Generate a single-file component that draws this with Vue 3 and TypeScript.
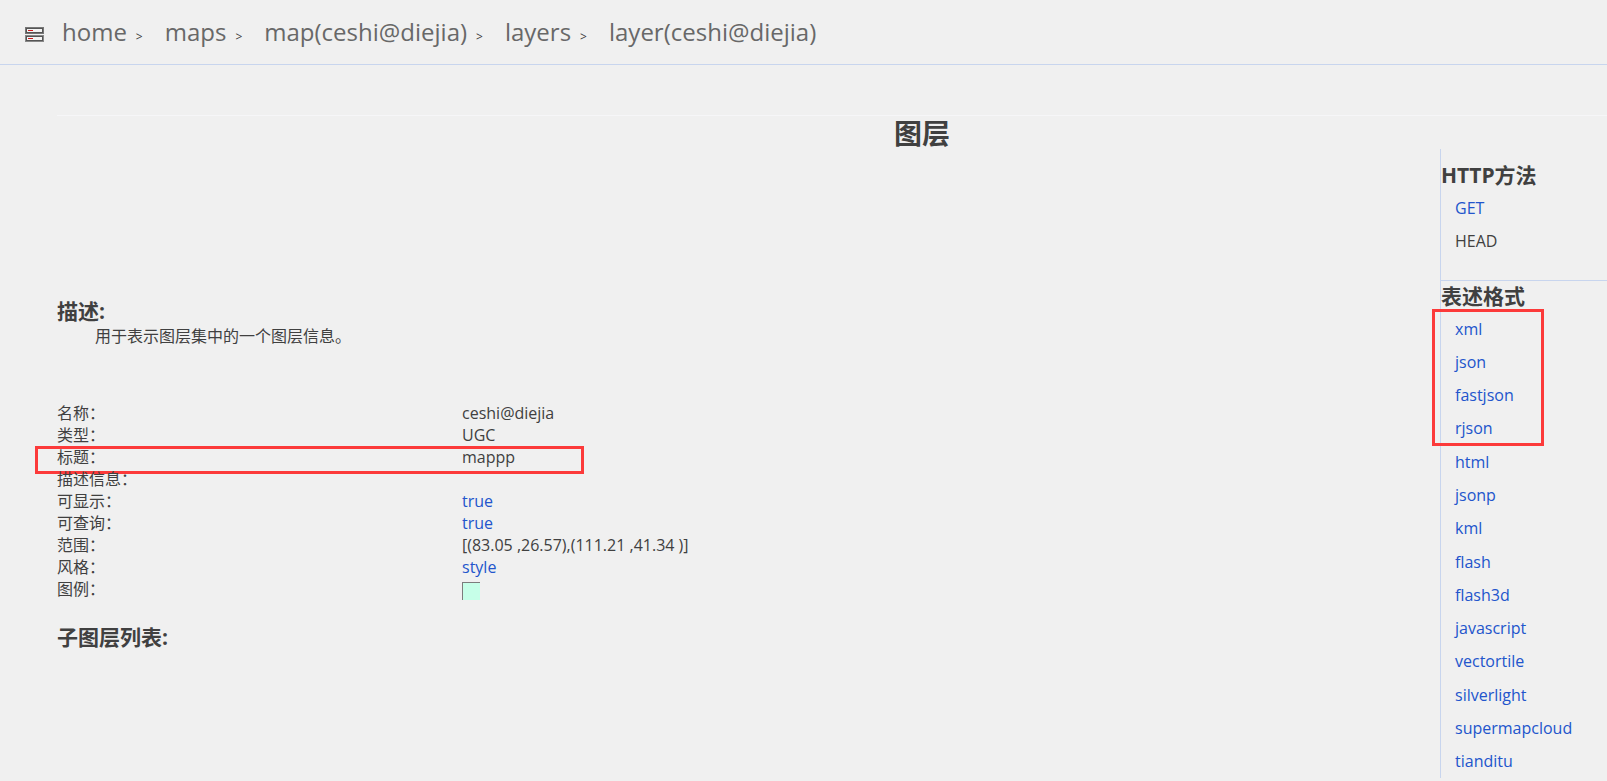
<script setup lang="ts">
interface Field {
  label: string
  value?: string
  link?: boolean
  swatch?: boolean
  marked?: boolean
}

const crumbs: string[] = ['home', 'maps', 'map(ceshi@diejia)', 'layers', 'layer(ceshi@diejia)']

const fields: Field[] = [
  { label: '名称：', value: 'ceshi@diejia' },
  { label: '类型：', value: 'UGC' },
  { label: '标题：', value: 'mappp', marked: true },
  { label: '描述信息：' },
  { label: '可显示：', value: 'true', link: true },
  { label: '可查询：', value: 'true', link: true },
  { label: '范围：', value: '[(83.05 ,26.57),(111.21 ,41.34 )]' },
  { label: '风格：', value: 'style', link: true },
  { label: '图例：', swatch: true },
]

const formats: string[] = [
  'xml', 'json', 'fastjson', 'rjson', 'html', 'jsonp', 'kml',
  'flash', 'flash3d', 'javascript', 'vectortile', 'silverlight',
  'supermapcloud', 'tianditu',
]
</script>

<template>
  <div class="page">
    <header class="topbar">
      <svg class="logo" width="19" height="15" viewBox="0 0 19 15" aria-hidden="true">
        <rect width="19" height="7" fill="#777" />
        <rect x="1" y="1" width="17" height="5" fill="#555" />
        <rect x="2" y="2" width="15" height="3" fill="#f4f4f4" />
        <rect x="3" y="3" width="5" height="1" fill="#d01c1c" />
        <rect y="8" width="19" height="7" fill="#888" />
        <rect x="1" y="9" width="17" height="5" fill="#555" />
        <rect x="2" y="10" width="15" height="3" fill="#f4f4f4" />
        <rect x="3" y="11" width="5" height="1" fill="#d01c1c" />
      </svg>
      <nav class="crumbs">
        <template v-for="(crumb, i) in crumbs" :key="i">
          <a href="#">{{ crumb }}</a>
          <span v-if="i < crumbs.length - 1" class="sep">&gt;</span>
        </template>
      </nav>
    </header>

    <main class="body">
      <h1>图层</h1>
      <div class="columns">
        <section class="content">
          <h2>描述:</h2>
          <p class="intro">用于表示图层集中的一个图层信息。</p>
          <table class="fields">
            <tbody>
              <tr v-for="field in fields" :key="field.label">
                <th scope="row">
                  {{ field.label }}
                  <span v-if="field.marked" class="mark row-mark"></span>
                </th>
                <td>
                  <a v-if="field.link" href="#">{{ field.value }}</a>
                  <span v-else-if="field.swatch" class="swatch"></span>
                  <template v-else>{{ field.value }}</template>
                </td>
              </tr>
            </tbody>
          </table>
          <h2>子图层列表:</h2>
        </section>

        <aside class="side">
          <section class="methods">
            <h2>HTTP方法</h2>
            <ul>
              <li><a href="#">GET</a></li>
              <li>HEAD</li>
            </ul>
          </section>
          <section class="formats">
            <h2>表述格式</h2>
            <ul>
              <li v-for="format in formats" :key="format"><a href="#">{{ format }}</a></li>
            </ul>
            <span class="mark format-mark"></span>
          </section>
        </aside>
      </div>
    </main>
  </div>
</template>

<style>
body {
  background: #f0f0f0;
}
</style>

<style scoped>
.page {
  box-sizing: border-box;
  display: flex;
  flex-direction: column;
  min-height: 100vh;
  padding-bottom: 3px;
  overflow-x: hidden;
  color: #404040;
  font-family: "Open Sans", "Noto Sans CJK SC", sans-serif;
  font-size: 16px;
  line-height: 22px;
}
a {
  color: #2255cc;
  text-decoration: none;
}
h1,
h2,
p,
ul {
  margin: 0;
  padding: 0;
}
ul {
  list-style: none;
}
.topbar {
  display: flex;
  align-items: center;
  gap: 18px;
  height: 64px;
  padding-left: 25px;
  border-bottom: 1px solid #c8d5ee;
}
.logo {
  margin-top: 4px;
}
.crumbs {
  display: flex;
  align-items: baseline;
  padding-top: 4px;
  line-height: 32px;
}
.crumbs a {
  color: #686868;
  font-size: 24px;
}
.sep {
  margin: 0 22px 0 9px;
  font-size: 12px;
}
.body {
  display: flex;
  flex: 1;
  flex-direction: column;
  margin: 50px 0 0 57px;
  border-top: 1px solid #f6f6f8;
}
h1 {
  padding-top: 1px;
  padding-left: 180px;
  font-size: 28px;
  line-height: 32px;
  text-align: center;
}
h2 {
  font-size: 21px;
  line-height: 28px;
}
.columns {
  display: flex;
  flex: 1;
}
.content {
  flex: 1;
  padding-top: 148px;
}
.intro {
  padding-left: 38px;
}
.fields {
  width: 100%;
  margin: 55px 0 23px;
  border-collapse: collapse;
}
.fields th {
  position: relative;
  width: 405px;
  font-weight: 400;
  text-align: left;
}
.fields th,
.fields td {
  height: 22px;
  padding: 0;
}
.swatch {
  display: block;
  box-sizing: border-box;
  width: 18px;
  height: 18px;
  margin-top: 4px;
  border-top: 1px solid #7c7c7c;
  border-left: 1px solid #7c7c7c;
  background: #c6ffe8;
}
.mark {
  position: absolute;
  box-sizing: border-box;
  border: 3px solid #fc3a3a;
  pointer-events: none;
}
.row-mark {
  top: 0;
  left: -22px;
  width: 549px;
  height: 28px;
}
.side {
  display: flex;
  flex-direction: column;
  box-sizing: border-box;
  width: 167px;
  border-left: 1px solid #c8d5ee;
}
.methods {
  padding: 12px 0 22px;
  border-bottom: 1px solid #c8d5ee;
}
.methods ul {
  padding-top: 3px;
}
.methods li {
  line-height: 33px;
}
.side ul {
  padding-left: 14px;
}
.formats {
  position: relative;
  display: flex;
  flex: 1;
  flex-direction: column;
}
.formats h2 {
  line-height: 31px;
}
.formats ul {
  display: grid;
  flex: 1;
  grid-auto-rows: 1fr;
  align-items: center;
}
.format-mark {
  top: 28px;
  left: -9px;
  width: 112px;
  height: 137px;
}
</style>
